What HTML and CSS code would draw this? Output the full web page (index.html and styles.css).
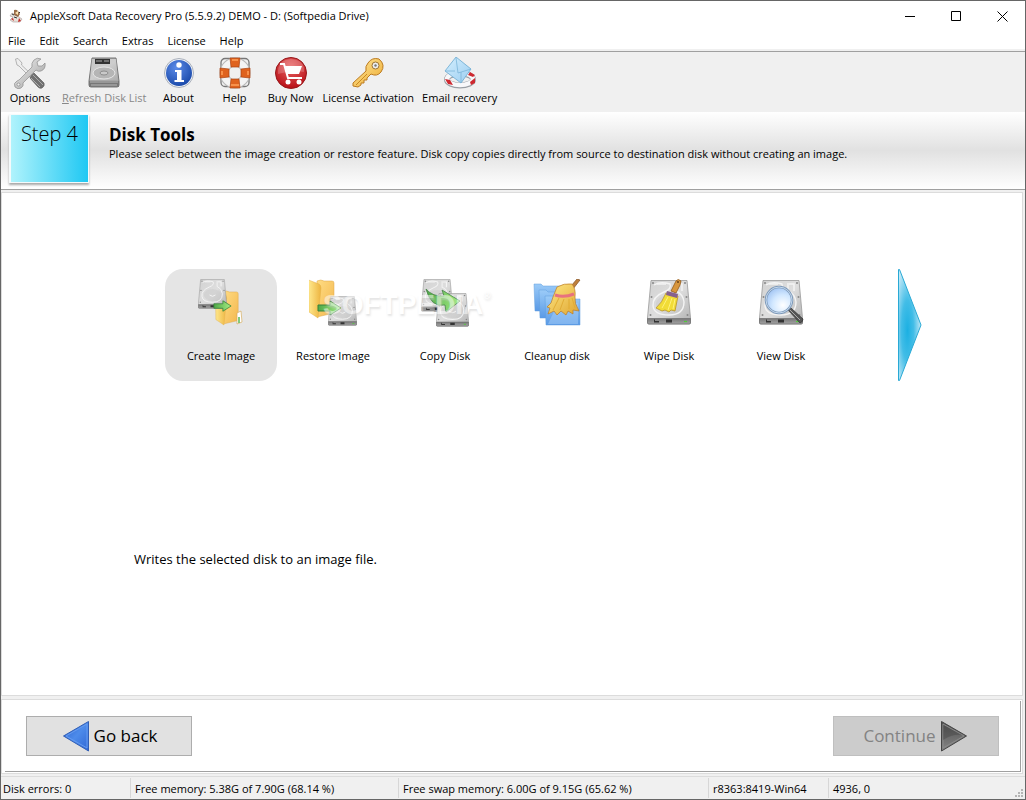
FILE: index.html
```html
<!DOCTYPE html>
<html lang="en">
<head>
<meta charset="utf-8">
<title>AppleXsoft Data Recovery Pro</title>
<link rel="stylesheet" href="styles.css">
</head>
<body>
<svg class="defs" width="0" height="0" aria-hidden="true">
  <defs>
    <linearGradient id="metal" x1="0" y1="0" x2="1" y2="1"><stop offset="0" stop-color="#d2d2d2"/><stop offset=".5" stop-color="#dedede"/><stop offset="1" stop-color="#b0b0b0"/></linearGradient>
    <linearGradient id="front" x1="0" y1="0" x2="0" y2="1"><stop offset="0" stop-color="#777"/><stop offset="1" stop-color="#a4a4a4"/></linearGradient>
    <linearGradient id="folderBack" x1="0" y1="0" x2="1" y2="0"><stop offset="0" stop-color="#ffe98e"/><stop offset="1" stop-color="#edb440"/></linearGradient>
    <linearGradient id="folderFront" x1="0" y1="0" x2="1" y2="1"><stop offset="0" stop-color="#ffdc83"/><stop offset="1" stop-color="#f3b74e"/></linearGradient>
    <linearGradient id="green" x1="0" y1="0" x2="1" y2="0"><stop offset="0" stop-color="#4fa848"/><stop offset="1" stop-color="#a5ee83"/></linearGradient>
    <linearGradient id="straw" x1="0" y1="0" x2="1" y2="1"><stop offset="0" stop-color="#ffe985"/><stop offset="1" stop-color="#dfa531"/></linearGradient>
    <linearGradient id="blueFolder" x1="0" y1="0" x2="0" y2="1"><stop offset="0" stop-color="#9bcbf8"/><stop offset="1" stop-color="#5a9ae6"/></linearGradient>
    <radialGradient id="lens" cx=".65" cy=".7" r=".8"><stop offset="0" stop-color="#fff"/><stop offset=".5" stop-color="#d2e8ff"/><stop offset="1" stop-color="#98bdf0"/></radialGradient>
    <radialGradient id="aboutBlue" cx=".4" cy=".3" r=".8"><stop offset="0" stop-color="#5b8be8"/><stop offset="1" stop-color="#1443a4"/></radialGradient>
    <radialGradient id="cartRed" cx=".5" cy=".3" r=".7"><stop offset="0" stop-color="#e96464"/><stop offset="1" stop-color="#b80f16"/></radialGradient>
    <linearGradient id="steel" x1="0" y1="0" x2="1" y2="1"><stop offset="0" stop-color="#f6f6f6"/><stop offset="1" stop-color="#999"/></linearGradient>
    <linearGradient id="gold" x1="0" y1="0" x2="1" y2="1"><stop offset="0" stop-color="#ffe9a0"/><stop offset="1" stop-color="#eda92b"/></linearGradient>
    <linearGradient id="paper" x1="0" y1="0" x2="1" y2="1"><stop offset="0" stop-color="#d4effe"/><stop offset="1" stop-color="#9bcdf0"/></linearGradient>
    <radialGradient id="nextBlue" cx=".4" cy=".55" r=".6"><stop offset="0" stop-color="#1cb0e2"/><stop offset=".45" stop-color="#42bde7"/><stop offset="1" stop-color="#c4e9f7"/></radialGradient>
    <linearGradient id="backBlue" x1="0" y1="0" x2="1" y2="1"><stop offset="0" stop-color="#2b62cf"/><stop offset=".5" stop-color="#4d8bea"/><stop offset="1" stop-color="#2f66d4"/></linearGradient>
    <linearGradient id="darkPlay" x1="0" y1="0" x2="0" y2="1"><stop offset="0" stop-color="#505050"/><stop offset="1" stop-color="#858585"/></linearGradient>
    <symbol id="drive" viewBox="0 0 44 45">
      <path d="M4 .5H40L43.500 38V42.500Q43.500 44 42 44H2Q.5 44 .5 42.500V38Z" fill="url(#metal)" stroke="#999" stroke-width=".8"/>
      <path d="M.5 38.500H43.500V43Q43.500 44 42 44H2Q.5 44 .5 43Z" fill="url(#front)" stroke="#6e6e6e" stroke-width=".7"/>
      <path d="M7 5Q13 1 23 4Q25 9 17 12Q5 17 6 26Q7 35 22 35Q37 35 37 22Q36 14 29 11V3" fill="none" stroke="#f4f4f4" stroke-width="1.400"/>
      <path d="M10 4H19M30 4H35V11" fill="none" stroke="#f4f4f4" stroke-width="1.500"/>
      <ellipse cx="22" cy="24" rx="13" ry="9" fill="#cdcdcd" opacity=".6"/>
      <path d="M17.500 24Q22 28 26.500 24" fill="none" stroke="#f4f4f4" stroke-width="1.500"/>
      <g fill="#888"><circle cx="6" cy="3" r="1"/><circle cx="38" cy="3" r="1"/><circle cx="4.500" cy="17" r="1"/><circle cx="39.500" cy="17" r="1"/><circle cx="3.500" cy="35" r="1"/><circle cx="40.500" cy="35" r="1"/></g>
      <path d="M7 39.500H8V41H12V42.500H7ZM19 39.500H25V42.500H19Z" fill="#333"/><path d="M37 41.500H40" stroke="#50cc3b" stroke-width="1.200"/>
    </symbol>
    <symbol id="folder" viewBox="0 0 28 40">
      <path d="M9 2Q13 0 16 2H24Q26 2 26 4V34L9 38Z" fill="url(#folderFront)" stroke="#dca74a" stroke-width=".5"/>
      <path d="M.5 1L11 5Q13 6 13 9L10 39L1 33Z" fill="url(#folderBack)" stroke="#e5b04b" stroke-width=".5"/>
    </symbol>
    <symbol id="arrow" viewBox="0 0 25 16"><path d="M1 5H13V1L24 8L13 15V11H1Z" fill="url(#green)" stroke="#37813a"/></symbol>
  </defs>
</svg>

<div class="window">
  <header class="titlebar">
    <svg class="app-icon" viewBox="0 0 14 14" aria-hidden="true"><path d="M3 4L1 7L4 8L1 11L4 13H11L13 10L10 8Z" fill="#e7e2db" stroke="#a99" stroke-width=".6"/><path d="M5 1Q7 0 9 2L11 5L9 8L5 6Z" fill="#986b47"/><path d="M6 4L9 2V6Z" fill="#fbe5b5"/><path d="M2 10L5 12L4 9ZM10 9L12 12L9 13Z" fill="#c62b27"/><path d="M5 8L8 9M3 5L5 6M10 3L11 4" stroke="#333"/></svg>
    <h1 class="window-title">AppleXsoft Data Recovery Pro (5.5.9.2) DEMO - D: (Softpedia Drive)</h1>
    <div class="window-controls">
      <button aria-label="Minimize"><svg width="11" height="11" viewBox="0 0 11 11"><path d="M0 5.500H10" stroke="#000"/></svg></button>
      <button aria-label="Maximize"><svg width="11" height="11" viewBox="0 0 11 11"><path d="M.5 .5H9.500V9.500H.5Z" fill="none" stroke="#000"/></svg></button>
      <button aria-label="Close"><svg width="11" height="11" viewBox="0 0 11 11"><path d="M.5 .5L10.500 10.500M10.500 .5L.5 10.500" stroke="#000"/></svg></button>
    </div>
  </header>

  <nav class="menubar" aria-label="Menu">
    <button>File</button><button>Edit</button><button>Search</button><button>Extras</button><button>License</button><button>Help</button>
  </nav>

  <div class="toolbar" role="toolbar" aria-label="Tools">
    <button class="tool">
      <svg viewBox="0 0 32 32"><path d="M1.500 2L4 1.500L8 6L7.500 8L19 19L17 21L5 9L3 8Z" fill="#eee" stroke="#999" stroke-width=".7"/><path d="M17 19L20 16L30 26Q31 29 28 31Q26 32 24 30L16 21Z" fill="#707070" stroke="#606060" stroke-width=".7"/><path d="M19 18L29 28M17 21L26 30" stroke="#aaa"/><path d="M20 3Q23 0 27 2L23 5L24 9L28 9L31 6Q32 12 27 14Q24 15 22 13L9 26Q10 29 7 31Q4 33 1 30Q-1 26 3 24L5 23L18 10Q17 6 20 3Z" fill="url(#steel)" stroke="#8d8d8d" stroke-width=".7"/><circle cx="4.500" cy="27.500" r="1.500" fill="#eee" stroke="#888" stroke-width=".7"/></svg>
      <span>Options</span>
    </button>
    <button class="tool" disabled>
      <svg viewBox="0 0 32 32"><path d="M4 1H28L31 24V28Q31 30 29 30H3Q1 30 1 28V24Z" fill="#a7a7a7" stroke="#777"/><path d="M4 2H28L30 23H2Z" fill="url(#metal)" opacity=".7"/><path d="M1 24H31V30H1Z" fill="#777"/><path d="M2 25H30M3 28H29" stroke="#b8b8b8"/><path d="M7 2H22V7H7Z" fill="#333"/><path d="M8 4H14M16 4H21" stroke="#aaa"/><ellipse cx="16" cy="16" rx="11" ry="6" fill="#b5b5b5" stroke="#e5e5e5"/><ellipse cx="16" cy="16" rx="4" ry="2" fill="#c9c9c9" stroke="#8d8d8d"/></svg>
      <span><u>R</u>efresh Disk List</span>
    </button>
    <button class="tool">
      <svg viewBox="0 0 32 32"><circle cx="16" cy="16" r="14.500" fill="#eef1f6" stroke="#aab0bb"/><circle cx="16" cy="16" r="13" fill="url(#aboutBlue)"/><circle cx="16" cy="8" r="2.700" fill="#fff"/><path d="M12 13H18.500V23H21V25H11.500V23H14V15H12Z" fill="#fff"/></svg>
      <span>About</span>
    </button>
    <button class="tool">
      <svg viewBox="0 0 32 32"><rect x="2" y="1.500" width="28" height="28" rx="4" fill="none" stroke="#777" stroke-width="1.300"/><circle cx="16" cy="16" r="11" fill="none" stroke="#b7b7b7" stroke-width="9"/><circle cx="16" cy="16" r="11" fill="none" stroke="#f4f4f4" stroke-width="7"/><path d="M11 1H21L20 10H12ZM11 31H21L20 22H12ZM1 11V21L10 20V12ZM31 11V21L22 20V12Z" fill="#df631f" stroke="#a94313" stroke-width=".7"/><path d="M13 3H19M12 28H20M3 14V18M29 14V18" stroke="#ffa15b" stroke-width="1.500"/></svg>
      <span>Help</span>
    </button>
    <button class="tool">
      <svg viewBox="0 0 32 32"><circle cx="16" cy="16" r="15.500" fill="url(#cartRed)" stroke="#96191b"/><path d="M3 17Q2 3 16 2Q30 3 29 15Q16 13 3 17Z" fill="#fff" opacity=".2"/><path d="M5 7H9L13 21H27" fill="none" stroke="#fff" stroke-width="2"/><path d="M10 9H27L24 17H12Z" fill="#fff"/><circle cx="13" cy="25" r="2.500" fill="#fff"/><circle cx="24" cy="25" r="2.500" fill="#fff"/></svg>
      <span>Buy Now</span>
    </button>
    <button class="tool">
      <svg viewBox="0 0 32 32"><path d="M16 6Q20 0 27 2Q34 8 29 15Q25 20 19 17L15 21V23H12V26H9V28L6 30L1 29V26L14 14Q13 9 16 6Z" fill="url(#gold)" stroke="#bc7b20"/><path d="M15 17L4 28" stroke="#c98923"/><circle cx="23.500" cy="8.500" r="3.500" fill="#eee" stroke="#9d7434"/><circle cx="23.500" cy="8.500" r="1.200" fill="#777"/></svg>
      <span>License Activation</span>
    </button>
    <button class="tool">
      <svg viewBox="0 0 32 32"><ellipse cx="16" cy="22.500" rx="13" ry="6" fill="none" stroke="#9a9fa5" stroke-width="6"/><ellipse cx="16" cy="22" rx="13" ry="6" fill="none" stroke="#f8f8fa" stroke-width="4.500"/><path d="M1 22L6 23L9 28L4 27ZM26 25L31 21L31 26L27 28ZM26 15L31 18L29 20L24 18Z" fill="#ce2930"/><path d="M12 0L27 12L17 26L1 14Z" fill="url(#paper)" stroke="#68a8d0" stroke-width=".8"/><path d="M12 1L14 16L27 12M1 14L11 14M17 25L17 15" fill="none" stroke="#7bb5d8" stroke-width=".8"/></svg>
      <span>Email recovery</span>
    </button>
  </div>

  <section class="step-banner">
    <div class="step-badge">Step 4</div>
    <div class="step-text">
      <h2>Disk Tools</h2>
      <p>Please select between the image creation or restore feature. Disk copy copies directly from source to destination disk without creating an image.</p>
    </div>
  </section>

  <main class="content">
    <div class="tiles">
      <button class="tile selected" aria-pressed="true">
        <svg viewBox="0 0 48 48"><use href="#folder" x="18" y="11" width="25" height="36"/><use href="#drive" x="1" y="0" width="29" height="30"/><path d="M40 34L44 32L45 43L40 45Z" fill="#fff" stroke="#d6ad60" stroke-width=".7"/><path d="M42 38V44" stroke="#58b852" stroke-width="1.500"/><use href="#arrow" x="16" y="21" width="19" height="12"/></svg>
        <span>Create Image</span>
      </button>
      <button class="tile">
        <svg viewBox="0 0 48 48"><use href="#folder" x="-1" y="0" width="28" height="40"/><use href="#drive" x="19" y="17" width="29" height="30"/><use href="#arrow" x="8" y="21" width="25" height="16"/></svg>
        <span>Restore Image</span>
      </button>
      <button class="tile">
        <svg viewBox="0 0 48 48"><use href="#drive" x="0" y="0" width="32" height="33"/><use href="#drive" x="15" y="14" width="33" height="34"/><path d="M5 10Q12 18 23 17L21 11L39 22L25 33L24 26Q10 29 5 10Z" fill="url(#green)" stroke="#49834a" stroke-width=".8"/></svg>
        <span>Copy Disk</span>
      </button>
      <button class="tile">
        <svg viewBox="0 0 48 48"><g fill="url(#blueFolder)" stroke="#609fdd" stroke-width=".5"><path d="M1 5H8L10 7H31V32H2Z"/><path d="M6 11H13L15 13H38V39H7Z"/><path d="M12 17H20L22 20H47V46H13Z"/></g><path d="M15 45L25 24H45V45Z" fill="#a6cdf7" opacity=".5"/><path d="M38 7L44 0L47 1L40 10Z" fill="#bf803c" stroke="#835022" stroke-width=".7"/><path d="M24 8Q31 4 39 5Q43 10 42 18Q41 24 46 32L40 31L40 35L35 32L33 36L28 32L24 36L21 32L15 35L17 29L14 28Q19 25 20 18Z" fill="url(#straw)" stroke="#bd7b25" stroke-width=".7"/><path d="M22 16Q31 19 41 15" fill="none" stroke="#e8727f" stroke-width="3"/><path d="M26 19L20 31M31 20L27 31M36 20L36 30M39 19L42 29" stroke="#e1ac35"/></svg>
        <span>Cleanup disk</span>
      </button>
      <button class="tile">
        <svg viewBox="0 0 48 48"><use href="#drive" x="2" y="1" width="44" height="45"/><path d="M26 12L31 2Q33 -1 36 2L35 6L31 14Z" fill="#d8963d" stroke="#925919" stroke-width=".8"/><circle cx="33" cy="3" r="1" fill="#674018"/><path d="M21 14L33 17L30 32L26 31L24 33L20 31L17 32L11 29Q17 24 21 14Z" fill="#f1dc36" stroke="#b99327" stroke-width=".8"/><path d="M22 12L33 15L32 19L21 16Z" fill="#86618f"/><path d="M23 18L17 29M27 19L23 31M30 20L28 30" stroke="#fff179"/></svg>
        <span>Wipe Disk</span>
      </button>
      <button class="tile">
        <svg viewBox="0 0 48 48"><use href="#drive" x="2" y="1" width="44" height="45"/><path d="M31 31L34 29L46 40Q46 43 43 44Z" fill="#555" stroke="#333" stroke-width=".7"/><path d="M33 31L43 41" stroke="#aaa"/><circle cx="22" cy="21" r="13" fill="url(#lens)" stroke="#7d99ba" stroke-width="2.500"/><circle cx="22" cy="21" r="13" fill="none" stroke="#c4d8ec"/></svg>
        <span>View Disk</span>
      </button>
      <button class="next" aria-label="Next tools"><svg width="24" height="112" viewBox="0 0 24 112"><path d="M.5 .5H1.500L23 56L1.500 111.500H.5Z" fill="url(#nextBlue)" stroke="#29a9d5"/></svg></button>
      <div class="watermark" aria-hidden="true">SOFTPEDIA<sup>®</sup></div>
    </div>
    <p class="hint">Writes the selected disk to an image file.</p>
  </main>

  <div class="wizard-nav">
    <div class="wizard-inner">
      <button class="wizard-button">
        <svg viewBox="0 0 28 32"><path d="M27.500 1.500V31L2.500 16Z" fill="url(#backBlue)" stroke="#315eb5"/><path d="M26 4V28L5 16Z" fill="none" stroke="#659bf0"/></svg>
        <span>Go back</span>
      </button>
      <button class="wizard-button" disabled>
        <span>Continue</span>
        <svg viewBox="0 0 28 32"><path d="M.5 1.500V31L25.500 16Z" fill="url(#darkPlay)" stroke="#444"/><path d="M2 4V28L23 16Z" fill="none" stroke="#8a8a8a"/><path d="M2 5L21 15Q11 14 2 20Z" fill="#444" opacity=".45"/></svg>
      </button>
    </div>
  </div>

  <footer class="statusbar">
    <span>Disk errors: 0</span>
    <span>Free memory: 5.38G of 7.90G (68.14 %)</span>
    <span>Free swap memory: 6.00G of 9.15G (65.62 %)</span>
    <span>r8363:8419-Win64</span>
    <span>4936, 0</span>
    <svg class="grip" width="9" height="9" viewBox="0 0 9 9"><path d="M6 0H8V2H6ZM3 3H5V5H3ZM6 3H8V5H6ZM0 6H2V8H0ZM3 6H5V8H3ZM6 6H8V8H6Z" fill="#b5b5b5"/></svg>
  </footer>
</div>
</body>
</html>
```

FILE: styles.css
```css
* { box-sizing: border-box; }

body {
  margin: 0;
  color: #000;
  font: 11px/16px "Open Sans", "Noto Sans", sans-serif;
}

h1, h2, p { margin: 0; }

button {
  margin: 0;
  padding: 0;
  border: 0;
  background: none;
  color: inherit;
  font: inherit;
}

svg { display: block; }

.defs { position: absolute; }

.window {
  display: flex;
  flex-direction: column;
  min-height: 100vh;
  border: 1px solid #666;
  background: #f0f0f0;
}

.titlebar {
  display: flex;
  align-items: center;
  height: 30px;
  padding-left: 8px;
  background: #fff;
}

.app-icon { width: 14px; height: 14px; }

.window-title {
  flex: 1;
  padding-left: 7px;
  font-size: 11px;
  font-weight: 400;
}

.window-controls { display: flex; }

.window-controls button {
  display: grid;
  place-items: center;
  width: 46px;
  height: 28px;
}

.menubar {
  display: flex;
  gap: 14px;
  height: 20px;
  padding: 2px 0 0 7px;
  border-bottom: 2px solid #f0f0f0;
  background: #fff;
}

.toolbar {
  display: flex;
  height: 61px;
  padding: 5px 0 0 1px;
  border-top: 1px solid #a0a0a0;
}

.tool {
  display: flex;
  flex-direction: column;
  align-items: center;
  min-width: 56px;
  padding: 0 4px;
}

.tool svg { width: 32px; height: 32px; }
.tool span { padding-top: 1px; }
.tool:disabled { color: #888; }

.step-banner {
  display: flex;
  align-items: flex-start;
  gap: 20px;
  height: 78px;
  padding: 2px 8px 0;
  border-bottom: 1px solid #a0a0a0;
  background: linear-gradient(#fff, #e1e1e1 50%, #fff);
}

.step-badge {
  width: 80px;
  height: 69px;
  padding-top: 7px;
  border: 1px solid #f5fafb;
  border-left-width: 2px;
  background: linear-gradient(90deg, #b0f3fc, #1fc8f3);
  box-shadow: 0 2px 2px #aaa;
  font-size: 20px;
  font-weight: 300;
  line-height: 24px;
  text-align: center;
}

.step-text { padding-top: 10px; }

.step-text h2 {
  font-size: 17px;
  line-height: 22px;
}

.content {
  flex: 1;
  margin: 2px 2px 0 0;
  padding: 76px 0 0 163px;
  border: 1px solid #dcdcdc;
  background: #fff;
}

.tiles {
  position: relative;
  display: flex;
}

.tile {
  display: flex;
  flex-direction: column;
  align-items: center;
  width: 112px;
  height: 112px;
  padding-top: 10px;
  border-radius: 18px;
}

.tile.selected { background: #e5e5e5; }
.tile svg { width: 48px; height: 48px; }
.tile span { padding-top: 21px; }

.next { margin-left: 61px; }

.watermark {
  position: absolute;
  top: 20px;
  left: 158px;
  color: #fff;
  font: bold 28px/32px "Liberation Sans", sans-serif;
  text-shadow: 1px 2px 2px #ccc;
  opacity: .5;
  pointer-events: none;
}

.watermark sup {
  font-size: 10px;
  line-height: 0;
  vertical-align: 15px;
}

.hint {
  margin: 170px 0 0 -31px;
  font-size: 13px;
}

.wizard-nav {
  margin: 3px 2px 2px 0;
  padding: 1px 1px 1px 3px;
  border: 1px solid #dcdcdc;
  background: #fff;
}

.wizard-inner {
  display: flex;
  justify-content: space-between;
  padding: 15px 21px;
  border: solid #a0a0a0;
  border-width: 0 1px 1px 0;
}

.wizard-button {
  display: flex;
  align-items: center;
  justify-content: center;
  gap: 5px;
  width: 166px;
  height: 40px;
  border: 1px solid #adadad;
  background: #e1e1e1;
  font-size: 17px;
}

.wizard-button svg { width: 28px; height: 32px; }

.wizard-button:disabled {
  border-color: #bfbfbf;
  background: #ccc;
  color: #838383;
}

.statusbar {
  display: grid;
  grid-template-columns: 129px 268px 310px 120px 1fr auto;
  align-items: center;
  height: 23px;
  border-top: 1px solid #dcdcdc;
}

.statusbar span {
  padding: 3px 0 1px 4px;
  border-left: 1px solid #d7d7d7;
}

.statusbar span:first-child {
  padding-left: 2px;
  border-left: 0;
}

.grip {
  align-self: end;
  margin: 0 1px 1px 0;
}
```
